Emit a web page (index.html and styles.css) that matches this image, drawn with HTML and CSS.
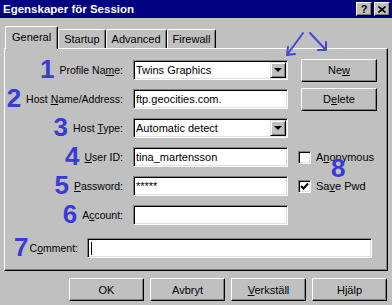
FILE: index.html
```html
<!DOCTYPE html>
<html lang="sv">
<head>
    <meta charset="UTF-8">
    <title>Egenskaper för Session</title>
    <link rel="stylesheet" href="styles.css">
</head>
<body>

<div class="dialog">
    <div class="titlebar">
        <span class="title">Egenskaper för Session</span>
        <div class="title-buttons">
            <span class="tbtn">?</span>
            <span class="tbtn">
                <svg width="8" height="7" viewBox="0 0 8 7"><path d="M0.5 0.5 L7.5 6.5 M7.5 0.5 L0.5 6.5" stroke="#000" stroke-width="1.6"/></svg>
            </span>
        </div>
    </div>

    <div class="tabs">
        <div class="tab active">General</div>
        <div class="tab">Startup</div>
        <div class="tab">Advanced</div>
        <div class="tab">Firewall</div>
    </div>

    <div class="panel">
        <div class="form">
            <div class="label"><span class="num">1</span><span>Profile Na<u>m</u>e:</span></div>
            <div class="field combo"><span class="value">Twins Graphics</span><span class="drop"></span></div>
            <button class="btn side">Ne<u>w</u></button>

            <div class="label"><span class="num">2</span><span>Host <u>N</u>ame/Address:</span></div>
            <div class="field">ftp.geocities.com.</div>
            <button class="btn side">D<u>e</u>lete</button>

            <div class="label"><span class="num">3</span><span>Host <u>T</u>ype:</span></div>
            <div class="field combo"><span class="value">Automatic detect</span><span class="drop"></span></div>
            <div></div>

            <div class="label"><span class="num">4</span><span><u>U</u>ser ID:</span></div>
            <div class="field">tina_martensson</div>
            <label class="check"><span class="box"></span><span>A<u>n</u>onymous</span></label>

            <div class="label"><span class="num">5</span><span><u>P</u>assword:</span></div>
            <div class="field">*****</div>
            <label class="check"><span class="box"><svg width="9" height="9" viewBox="0 0 9 9"><path d="M1 4 L3.5 6.5 L8 1.5" fill="none" stroke="#000" stroke-width="2"/></svg></span><span>Sa<u>v</u>e Pwd</span></label>

            <div class="label"><span class="num">6</span><span>A<u>c</u>count:</span></div>
            <div class="field"></div>
            <div></div>
        </div>

        <div class="comment-row">
            <div class="label comment-label"><span class="num">7</span><span>C<u>o</u>mment:</span></div>
            <div class="field comment"><span class="caret"></span></div>
        </div>
    </div>

    <div class="actions">
        <button class="btn">OK</button>
        <button class="btn">Avbryt</button>
        <button class="btn"><u>V</u>erkställ</button>
        <button class="btn">Hjälp</button>
    </div>

    <!-- annotations drawn over the dialog -->
    <svg class="arrows" width="56" height="34" viewBox="0 0 56 34">
        <path d="M23 5 L7 27 M7 27 L8 19 M7 27 L15 26" fill="none" stroke="#4646dc" stroke-width="2" stroke-linecap="round"/>
        <path d="M30 5 L46 22 M46 22 L46 14 M46 22 L38 22" fill="none" stroke="#4646dc" stroke-width="2" stroke-linecap="round"/>
    </svg>
    <span class="num eight">8</span>
</div>

</body>
</html>
```

FILE: styles.css
```css
body {
    margin: 0;
    background-color: #c0c0c0;
    font-family: "Liberation Sans", Arial, sans-serif;
    font-size: 11px;
    color: #000;
}

.dialog {
    position: relative;
    width: 392px;
    height: 305px;
}

/* title bar */
.titlebar {
    display: flex;
    justify-content: space-between;
    align-items: center;
    height: 18px;
    padding: 0 2px 0 3px;
    background-color: #000080;
    color: #fff;
    font-weight: bold;
}

.title {
    font-size: 11.5px;
}

.title-buttons {
    display: flex;
    gap: 2px;
}

.tbtn {
    display: flex;
    justify-content: center;
    align-items: center;
    box-sizing: border-box;
    width: 16px;
    height: 14px;
    background-color: #c0c0c0;
    color: #000;
    border: 1px solid;
    border-color: #fff #000 #000 #fff;
    box-shadow: inset -1px -1px #808080;
    font-size: 11px;
}

/* tabs */
.tabs {
    display: flex;
    align-items: flex-end;
    height: 22px;
    margin-top: 8px;
    padding-left: 5px;
}

.tab {
    height: 18px;
    line-height: 18px;
    padding: 0 5px;
    border: 1px solid #fff;
    border-right-color: #000;
    border-bottom: none;
    border-radius: 2px 2px 0 0;
    box-shadow: inset -1px 0 #808080;
}

.tab.active {
    position: relative;
    z-index: 1;
    height: 22px;
    line-height: 20px;
    margin-bottom: -1px;
    padding: 0 6px;
    background-color: #c0c0c0;
}

/* panel */
.panel {
    margin: 0 4px;
    padding: 11px 0 12px;
    border: 1px solid;
    border-color: #fff #000 #000 #fff;
    box-shadow: inset -1px -1px #808080;
}

.form {
    display: grid;
    grid-template-columns: 118px 155px auto;
    grid-auto-rows: 20px;
    column-gap: 10px;
    row-gap: 9px;
    align-items: center;
}

.label {
    display: flex;
    justify-content: flex-end;
    align-items: center;
    gap: 5px;
    font-size: 10.5px;
    white-space: nowrap;
}

.num {
    font-size: 26px;
    font-weight: bold;
    line-height: 20px;
    color: #3a3ad8;
    margin-top: -3px;
}

.field {
    display: flex;
    align-items: center;
    box-sizing: border-box;
    height: 20px;
    padding: 0 2px;
    background-color: #fff;
    border: 1px solid;
    border-color: #808080 #fff #fff #808080;
    box-shadow: inset 1px 1px #000, inset -1px -1px #dfdfdf;
    white-space: nowrap;
}

.combo {
    padding: 1px 1px 1px 2px;
}

.combo .value {
    flex: 1;
}

.drop {
    display: flex;
    justify-content: center;
    align-items: center;
    box-sizing: border-box;
    width: 16px;
    height: 16px;
    background-color: #c0c0c0;
    border: 1px solid;
    border-color: #dfdfdf #000 #000 #dfdfdf;
    box-shadow: inset 1px 1px #fff, inset -1px -1px #808080;
}

.drop::after {
    content: "";
    border-left: 4px solid transparent;
    border-right: 4px solid transparent;
    border-top: 4px solid #000;
}

.btn {
    box-sizing: border-box;
    width: 75px;
    height: 23px;
    padding: 0;
    background-color: #c0c0c0;
    border: 1px solid;
    border-color: #fff #000 #000 #fff;
    box-shadow: inset -1px -1px #808080;
    font-family: inherit;
    font-size: 11px;
    color: #000;
}

.btn.side {
    width: 76px;
    margin-left: 3px;
}

.check {
    display: flex;
    align-items: center;
    gap: 5px;
}

.box {
    display: flex;
    justify-content: center;
    align-items: center;
    box-sizing: border-box;
    width: 13px;
    height: 13px;
    background-color: #fff;
    border: 1px solid;
    border-color: #808080 #fff #fff #808080;
    box-shadow: inset 1px 1px #000, inset -1px -1px #dfdfdf;
}

.comment-row {
    display: flex;
    align-items: center;
    margin-top: 13px;
}

.comment-label {
    width: 73px;
    gap: 1px;
}

.comment {
    width: 285px;
    margin-left: 9px;
}

.caret {
    width: 1px;
    height: 13px;
    margin-left: 1px;
    background-color: #000;
}

/* bottom buttons */
.actions {
    display: flex;
    justify-content: flex-end;
    gap: 6px;
    margin-top: 7px;
    padding-right: 5px;
}

/* annotations */
.arrows {
    position: absolute;
    left: 280px;
    top: 28px;
}

.eight {
    position: absolute;
    left: 331px;
    top: 158px;
    margin: 0;
}
```
